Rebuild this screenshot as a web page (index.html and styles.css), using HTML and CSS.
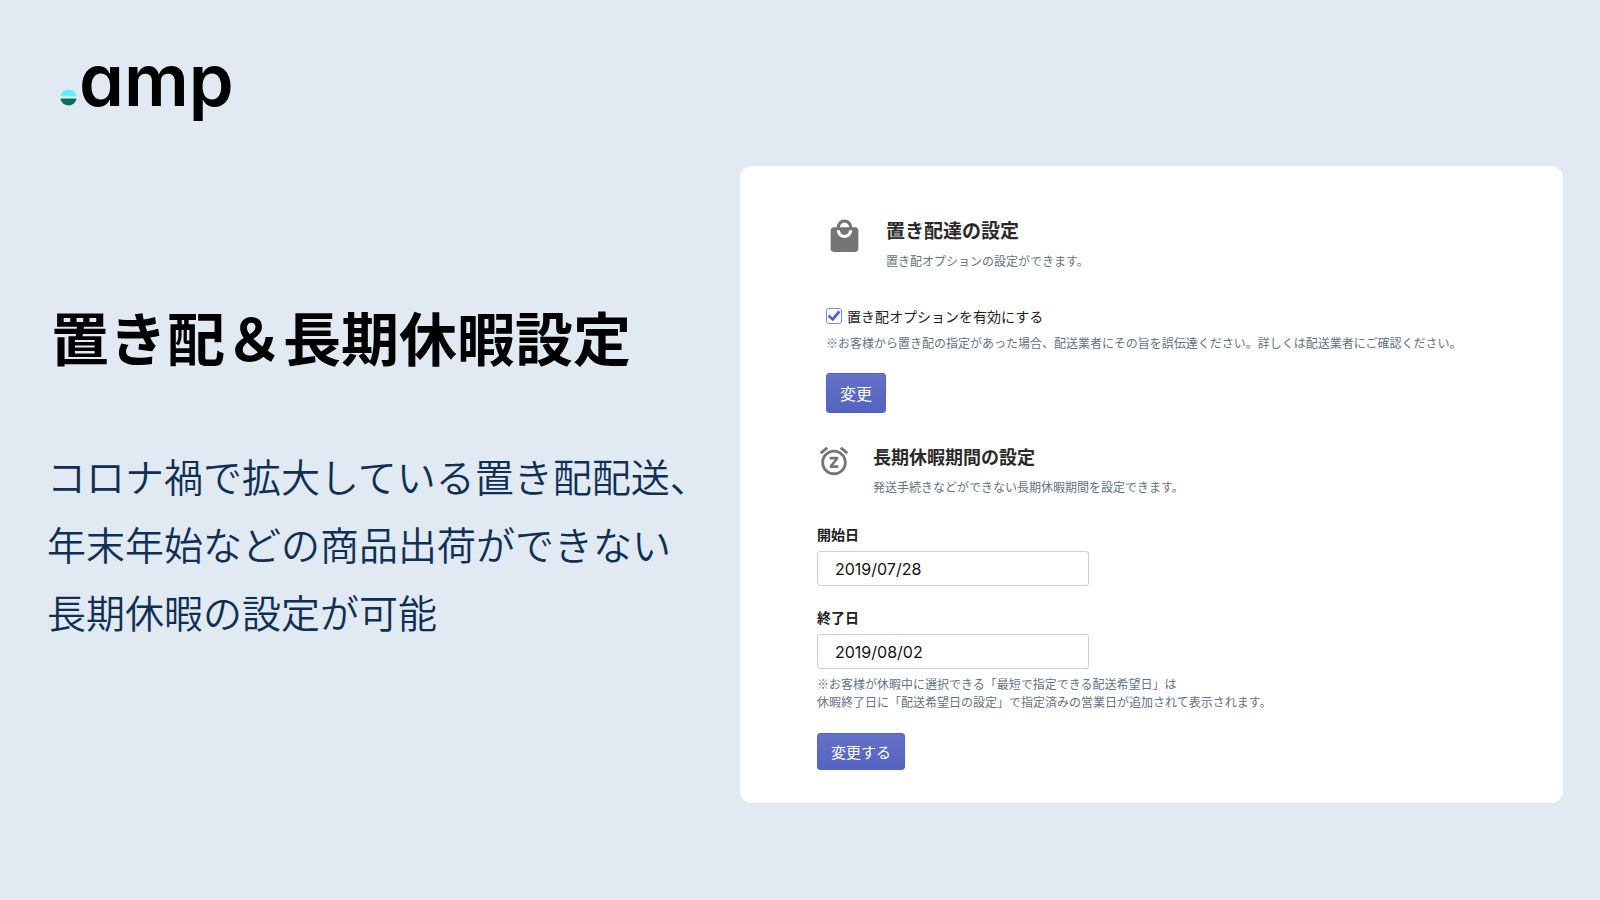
FILE: index.html
```html
<!DOCTYPE html>
<html lang="ja">
<head>
    <meta charset="UTF-8">
    <meta name="viewport" content="width=device-width, initial-scale=1.0">
    <title>置き配＆長期休暇設定 - .amp</title>
    <link rel="stylesheet" href="styles.css">
</head>
<body>

<header class="header">
    <div class="logo">
        <svg class="logo-dot" width="17" height="17" viewBox="0 0 17 17" aria-hidden="true">
            <circle cx="8.5" cy="8.5" r="8.3" fill="#f1fafc"/>
            <path d="M.3 7.5a8.3 8.3 0 0 1 16.4 0z" fill="#62eef8"/>
            <path d="M.3 9.5a8.3 8.3 0 0 0 16.4 0z" fill="#08705a"/>
        </svg>
        <span class="logo-text">amp</span>
    </div>
</header>

<main class="main">
    <div class="intro">
        <h1>置き配＆長期休暇設定</h1>
        <p>コロナ禍で拡大している置き配配送、<br>年末年始などの商品出荷ができない<br>長期休暇の設定が可能</p>
    </div>

    <div class="card">
        <form class="section delivery">
            <div class="section-head">
                <svg class="icon" viewBox="0 0 24 24" aria-hidden="true">
                    <path d="M19 6h-2c0-2.76-2.24-5-5-5S7 3.24 7 6H5c-1.1 0-2 .9-2 2v12c0 1.1.9 2 2 2h14c1.1 0 2-.9 2-2V8c0-1.1-.9-2-2-2zm-7-3c1.66 0 3 1.34 3 3H9c0-1.66 1.34-3 3-3zm0 10c-2.76 0-5-2.24-5-5h2c0 1.66 1.34 3 3 3s3-1.34 3-3h2c0 2.76-2.24 5-5 5z"/>
                </svg>
                <div>
                    <h2>置き配達の設定</h2>
                    <p class="note">置き配オプションの設定ができます。</p>
                </div>
            </div>
            <div class="check">
                <input type="checkbox" id="okihai" checked>
                <label for="okihai">置き配オプションを有効にする</label>
            </div>
            <p class="note">※お客様から置き配の指定があった場合、配送業者にその旨を誤伝達ください。詳しくは配送業者にご確認ください。</p>
            <button type="button" class="btn">変更</button>
        </form>

        <form class="section holiday">
            <div class="section-head">
                <svg class="icon" viewBox="0 0 24 24" aria-hidden="true">
                    <path d="M7.88 3.39L6.6 1.86 2 5.71l1.29 1.53 4.59-3.85zM22 5.72l-4.6-3.86-1.29 1.53 4.6 3.86L22 5.72zM12 4c-4.97 0-9 4.03-9 9s4.02 9 9 9c4.97 0 9-4.03 9-9s-4.03-9-9-9zm0 16c-3.87 0-7-3.13-7-7s3.13-7 7-7 7 3.13 7 7-3.13 7-7 7zm-3-9h3.63L9 15.2V17h6v-2h-3.63L15 10.8V9H9v2z"/>
                </svg>
                <div>
                    <h2>長期休暇期間の設定</h2>
                    <p class="note">発送手続きなどができない長期休暇期間を設定できます。</p>
                </div>
            </div>
            <div class="field">
                <label for="start">開始日</label>
                <input type="text" id="start" value="2019/07/28">
            </div>
            <div class="field">
                <label for="end">終了日</label>
                <input type="text" id="end" value="2019/08/02">
            </div>
            <p class="note">※お客様が休暇中に選択できる「最短で指定できる配送希望日」は<br>休暇終了日に「配送希望日の設定」で指定済みの営業日が追加されて表示されます。</p>
            <button type="button" class="btn">変更する</button>
        </form>
    </div>
</main>

</body>
</html>
```
FILE: styles.css
```css
* {
    box-sizing: border-box;
}
body {
    font-family: "Noto Sans CJK JP", sans-serif;
    background-color: #e1eaf2;
    color: #212121;
    margin: 0;
}
h1, h2, p {
    margin: 0;
}

/* Logo */
.header {
    height: 166px;
    padding: 35px 60px 0;
}
.logo {
    display: flex;
    align-items: baseline;
    gap: 2px;
}
.logo-text {
    font-family: Inter, sans-serif;
    font-size: 72px;
    line-height: 90px;
    font-weight: 600;
    font-feature-settings: "cv11";
    color: #000;
}

.main {
    display: grid;
    grid-template-columns: 693fr 823fr;
    align-items: start;
    padding: 0 37px 40px 47px;
}

/* Left side copy */
.intro {
    padding-top: 136px;
}
.intro h1 {
    padding-left: 4px;
    font-size: 58px;
    line-height: 68px;
    font-weight: 700;
    color: #000;
    white-space: nowrap;
}
.intro p {
    margin-top: 71px;
    font-size: 39px;
    line-height: 68px;
    font-weight: 350;
    color: #0f3054;
    white-space: nowrap;
}

/* Settings card */
.card {
    background-color: #fff;
    border-radius: 12px;
    padding: 52px 40px 33px 77px;
}
.section-head {
    display: flex;
    align-items: flex-start;
}
.section-head h2 {
    font-size: 18px;
    line-height: 24px;
    font-weight: 700;
    color: #2a2a2a;
}
.section-head .note {
    margin-top: 10px;
}
.icon {
    flex: none;
    fill: #757575;
}
.note {
    font-size: 12px;
    line-height: 18px;
    color: #637381;
}
.btn {
    display: block;
    padding: 0 13px;
    border: 1px solid #5563c1;
    border-radius: 3px;
    background: linear-gradient(#6371c7, #5563c1);
    color: #fff;
    font-family: inherit;
    cursor: pointer;
}

.delivery {
    padding-left: 9px;
}
.delivery .icon {
    width: 37px;
    height: 37px;
    margin-right: 23px;
}
.section.delivery h2 {
    font-size: 19px;
}
.check {
    display: flex;
    align-items: center;
    gap: 5px;
    margin: 34px 0 6px;
    font-size: 14px;
    line-height: 24px;
}
.check input {
    appearance: none;
    width: 16px;
    height: 16px;
    margin: 0;
    border: 1px solid #7c88dc;
    border-radius: 3px;
    background-color: #fff;
}
.check input:checked::before {
    content: "";
    display: block;
    width: 14px;
    height: 14px;
    background-color: #4f5fd0;
    clip-path: polygon(4% 54%, 18% 40%, 39% 60%, 80% 10%, 96% 24%, 42% 88%);
}
.delivery .btn {
    height: 40px;
    margin-top: 21px;
    font-size: 16px;
}

.holiday {
    margin-top: 31px;
}
.holiday .icon {
    width: 34px;
    height: 34px;
    margin-right: 22px;
}
.field {
    margin-top: 21px;
}
.section-head + .field {
    margin-top: 28px;
}
.field label {
    display: block;
    font-size: 14px;
    line-height: 20px;
    font-weight: 700;
    margin-bottom: 7px;
}
.field input {
    display: block;
    width: 272px;
    height: 35px;
    padding: 0 17px;
    border: 1px solid #c8d0da;
    border-radius: 3px;
    background-color: #fff;
    font-family: Inter, sans-serif;
    font-size: 16px;
    color: #111;
}
.field + .note {
    margin-top: 6px;
}
.holiday .btn {
    height: 37px;
    margin-top: 22px;
    font-size: 15px;
}
```
